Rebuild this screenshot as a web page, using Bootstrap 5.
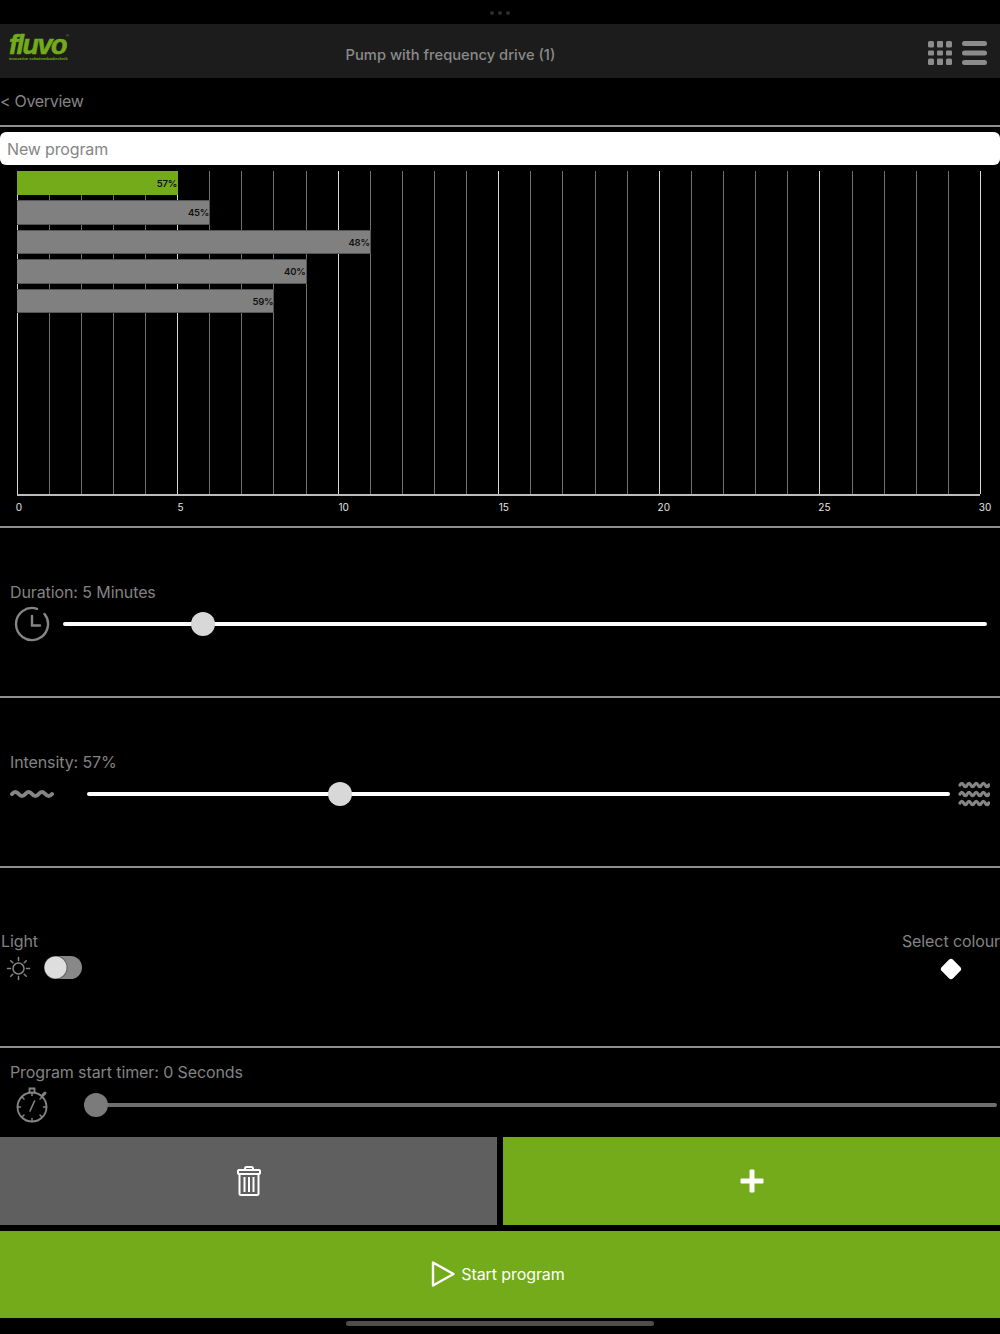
<!DOCTYPE html>
<html lang="en">
<head>
    <meta charset="UTF-8">
    <meta name="viewport" content="width=device-width, initial-scale=1.0">
    <title>Pump with frequency drive</title>
    <link href="https://cdn.jsdelivr.net/npm/bootstrap@5.3.0/dist/css/bootstrap.min.css" rel="stylesheet">
    <style>
        :root {
            --fluvo-green: #73ab1a;
            --soft-grey: #838383;
        }

        html, body {
            background: #000;
            height: 1334px;
            overflow: hidden;
        }

        body {
            font-family: "Inter", "Liberation Sans", sans-serif;
            font-size: 16px;
            color: var(--soft-grey);
        }

        .status-strip {
            height: 24px;
            padding-top: 11px;
        }

        .status-strip i {
            width: 4px;
            height: 4px;
            border-radius: 50%;
            background: #2c2c2c;
        }

        .app-header {
            height: 54px;
            background: #1c1c1c;
            padding: 0;
        }

        .brand-mark {
            margin: 0 0 0 9px;
            width: 60px;
            padding: 0;
            color: var(--fluvo-green);
            font-family: "Liberation Sans", sans-serif;
            line-height: 1;
            position: relative;
            top: -3px;
        }

        .brand-name {
            display: block;
            font-size: 27px;
            font-weight: 700;
            font-style: italic;
            letter-spacing: -1.5px;
            line-height: 21px;
            -webkit-text-stroke: .6px var(--fluvo-green);
        }

        .brand-name sup {
            font-size: 4px;
            font-style: normal;
            top: -17px;
            font-weight: 400;
            -webkit-text-stroke: 0;
        }

        .brand-tag {
            display: block;
            font-size: 3.9px;
            font-weight: 700;
            white-space: nowrap;
            line-height: 5px;
        }

        .page-title {
            width: 763px;
            padding-top: 8px;
            font-size: 14.7px;
            font-weight: 500;
            text-align: center;
            color: #8a8a8a;
        }

        .menu-icons {
            gap: 10px;
            padding: 3px 13px 0 0;
        }

        .back-row {
            height: 49px;
            padding: 11px 0 0;
            border-bottom: 2px solid #8f8f8f;
            font-size: 16px;
            line-height: 24px;
            letter-spacing: -.3px;
            color: #858585;
        }

        .program-name {
            margin-top: 5px;
            height: 33px;
            padding: 0 7px;
            border: 0;
            border-radius: 6px;
            font-size: 16px;
            letter-spacing: -.15px;
            color: #333;
        }

        .program-name::placeholder {
            color: #858585;
            opacity: 1;
        }

        .chart-box {
            height: 363px;
            position: relative;
            border-bottom: 2px solid #8f8f8f;
        }

        .chart-canvas {
            position: absolute;
            left: 16.5px;
            top: 6px;
            width: 963.5px;
            height: 325px;
            border-bottom: 2px solid #bdbdbd;
        }

        .grid-line {
            position: absolute;
            top: 0;
            bottom: 0;
            width: 1px;
            background: #707070;
        }

        .grid-line.major {
            background: #d8d8d8;
        }

        .bar-stack {
            position: relative;
            gap: 5px;
        }

        .time-bar {
            height: 24.4px;
            background: #808080;
            border: 1px solid #555;
            border-left: 0;
            font-size: 9.5px;
            font-weight: 600;
            letter-spacing: -.2px;
            line-height: 23px;
            text-align: right;
            color: #111;
        }

        .time-bar.active {
            background: var(--fluvo-green);
            border-color: var(--fluvo-green);
        }

        .axis-label {
            position: absolute;
            top: 330px;
            font-size: 10px;
            font-weight: 400;
            line-height: 12px;
            color: #e4e4e4;
            transform: translateX(-50%);
        }

        .control-block {
            height: 170px;
            padding-left: 10px;
            border-bottom: 2px solid #8f8f8f;
        }

        .control-label {
            font-size: 16px;
            line-height: 24px;
            letter-spacing: -.1px;
        }

        .control-row {
            height: 37px;
            margin: 1px 0 2px;
        }

        .slim-range {
            appearance: none;
            -webkit-appearance: none;
            background: transparent;
            height: 24px;
            display: block;
            margin: 0;
            padding: 0;
        }

        .slim-range::-webkit-slider-runnable-track {
            height: 4px;
            border-radius: 2px;
            background: #fff;
        }

        .slim-range::-webkit-slider-thumb {
            -webkit-appearance: none;
            width: 24px;
            height: 24px;
            margin-top: -10px;
            border-radius: 50%;
            background: #d8d8d8;
            border: 0;
        }

        .slim-range.muted::-webkit-slider-runnable-track {
            background: #6e6e6e;
        }

        .slim-range.muted::-webkit-slider-thumb {
            background: #7b7b7b;
        }

        .range-duration { width: 924px; margin-left: 10px; }
        .range-intensity { width: 863px; margin-left: 11px; }
        .range-timer { width: 913px; margin-left: 30px; }

        .light-block {
            height: 180px;
            padding-top: 61px;
            border-bottom: 2px solid #8f8f8f;
        }

        .light-side {
            padding-left: 1px;
        }

        .light-row {
            height: 30px;
            gap: 13px;
            padding-left: 5px;
        }

        .light-toggle.form-check-input {
            width: 38px;
            height: 23px;
            margin: 0;
            border: 0;
            float: none;
            background-color: #888;
            background-image: radial-gradient(circle at 11.5px 11.5px, #dedede 10.5px, #5f5f5f 11.5px, #888 12.5px);
            background-size: auto;
            border-radius: 12px;
        }

        .colour-pick {
            height: 30px;
        }

        .colour-dot {
            width: 16px;
            height: 16px;
            margin: 2px 41px 0 0;
            background: #fff;
            border-radius: 3px;
            transform: rotate(45deg);
        }

        .timer-block {
            height: 89px;
            padding: 12px 0 0 10px;
        }

        .timer-block .control-row {
            height: 42px;
            margin: 0;
        }

        .action-row {
            gap: 6px;
        }

        .square-btn {
            height: 88px;
            border: 0;
            border-radius: 0;
            color: #fff;
            font-size: 16px;
        }

        .btn-trash, .btn-trash:hover {
            background: #5f5f5f;
        }

        .btn-go, .btn-go:hover {
            background: var(--fluvo-green);
            color: #fff;
        }

        .start-btn {
            margin-top: 6px;
            height: 87px;
            padding: 0 4px 2px 0;
            gap: 6px;
            letter-spacing: -.1px;
        }

        .home-bar {
            width: 308px;
            height: 5px;
            margin: 3px auto 0;
            border-radius: 3px;
            background: #4e4e4e;
        }
    </style>
</head>
<body>
    <div class="status-strip d-flex justify-content-center gap-1">
        <i></i><i></i><i></i>
    </div>

    <nav class="navbar app-header flex-nowrap justify-content-start">
        <a class="navbar-brand brand-mark" href="#">
            <span class="brand-name">fluvo<sup>®</sup></span>
            <span class="brand-tag">innovative schwimmbadtechnik</span>
        </a>
        <div class="page-title">Pump with frequency drive (1)</div>
        <div class="menu-icons d-flex ms-auto">
            <svg width="24" height="24" viewBox="0 0 24 24" fill="#8c8c8c">
                <rect x="0" y="0" width="6" height="6.5" rx="1.5"/><rect x="9" y="0" width="6" height="6.5" rx="1"/><rect x="18" y="0" width="6" height="6.5" rx="1.5"/>
                <rect x="0" y="9.500" width="6" height="5" rx="1"/><rect x="9" y="9.500" width="6" height="5" rx="1"/><rect x="18" y="9.500" width="6" height="5" rx="1"/>
                <rect x="0" y="17.500" width="6" height="6.500" rx="1.500"/><rect x="9" y="17.500" width="6" height="6.500" rx="1"/><rect x="18" y="17.500" width="6" height="6.500" rx="1.500"/>
            </svg>
            <svg width="25" height="24" viewBox="0 0 25 24" fill="#8c8c8c">
                <rect x="0" y="0" width="25" height="5" rx="2.500"/><rect x="0" y="9.500" width="25" height="5" rx="2.500"/><rect x="0" y="19" width="25" height="5" rx="2.500"/>
            </svg>
        </div>
    </nav>

    <div class="back-row">&lt; Overview</div>

    <input type="text" class="form-control program-name" placeholder="New program">

    <div class="chart-box">
        <div class="chart-canvas" id="chartCanvas">
            <div class="bar-stack d-flex flex-column" id="barStack"></div>
        </div>
    </div>

    <div class="control-block d-flex flex-column justify-content-center">
        <div class="control-label">Duration: 5 Minutes</div>
        <div class="control-row d-flex align-items-center">
            <svg width="43" height="36" viewBox="0 0 43 36" fill="none" stroke="#858585" stroke-width="2.400" stroke-linecap="round">
                <path d="M27 2.800A16 16 0 1 0 34.500 8"/>
                <path d="M22 10v9.500h8"/>
            </svg>
            <input type="range" class="slim-range range-duration" min="0" max="1000" value="142">
        </div>
    </div>

    <div class="control-block d-flex flex-column justify-content-center">
        <div class="control-label">Intensity: 57%</div>
        <div class="control-row d-flex align-items-center">
            <svg width="66" height="12" viewBox="0 0 66 12" fill="none" stroke="#858585" stroke-width="4" stroke-linecap="round">
                <path d="M2 6q3.330-4 6.670 0t6.670 0t6.670 0t6.670 0t6.670 0t6.670 0"/>
            </svg>
            <input type="range" class="slim-range range-intensity" min="0" max="1000" value="287">
            <svg class="ms-2" width="32" height="26" viewBox="0 0 32 26" fill="none" stroke="#858585" stroke-width="3.200" stroke-linecap="round">
                <path d="M2 4q1.800-3.500 3.600 0t3.600 0t3.600 0t3.600 0t3.600 0t3.600 0t3.600 0t3.600 0"/>
                <path d="M2 13q1.800-3.500 3.600 0t3.600 0t3.600 0t3.600 0t3.600 0t3.600 0t3.600 0t3.600 0"/>
                <path d="M2 22q1.800-3.500 3.600 0t3.600 0t3.600 0t3.600 0t3.600 0t3.600 0t3.600 0t3.600 0"/>
            </svg>
        </div>
    </div>

    <div class="light-block d-flex justify-content-between">
        <div class="light-side">
            <div class="control-label">Light</div>
            <div class="light-row d-flex align-items-center">
                <svg width="25" height="25" viewBox="0 0 25 25" fill="none" stroke="#858585" stroke-width="1.500" stroke-linecap="round">
                    <circle cx="12.500" cy="12.500" r="5.500"/>
                    <path d="M12.500 1.500v3M12.500 20.500v3M1.500 12.500h3M20.500 12.500h3M4.700 4.700l2.100 2.100M18.200 18.200l2.100 2.100M4.700 20.300l2.100-2.100M18.200 6.800l2.100-2.100"/>
                </svg>
                <div class="form-check form-switch m-0 p-0 d-flex">
                    <input class="form-check-input light-toggle" type="checkbox" role="switch">
                </div>
            </div>
        </div>
        <div class="d-flex flex-column align-items-end">
            <div class="control-label">Select colour</div>
            <div class="colour-pick d-flex align-items-center"><div class="colour-dot"></div></div>
        </div>
    </div>

    <div class="timer-block">
        <div class="control-label">Program start timer: 0 Seconds</div>
        <div class="control-row d-flex align-items-center">
            <svg width="44" height="36" viewBox="0 0 44 36" fill="none" stroke="#858585" stroke-width="1.800" stroke-linecap="round">
                <circle cx="22" cy="20" r="14.500"/>
                <path d="M19.500 5.500V1.500h5v4"/>
                <path d="M33 8l2-2" stroke-width="3"/>
                <path d="M20 24l4.500-10" stroke-width="1.600"/>
                <path d="M22 5.500v3M22 31.500v3M7.500 20h3M33.500 20h3M12 10l2 2M30 28l2 2M12 30l2-2M30 12l2-2" stroke-width="1.500"/>
            </svg>
            <input type="range" class="slim-range muted range-timer" min="0" max="100" value="0">
        </div>
    </div>

    <div class="action-row d-flex">
        <button type="button" class="btn square-btn btn-trash flex-fill w-50 d-flex align-items-center justify-content-center">
            <svg width="24" height="30" viewBox="0 0 24 30" fill="none" stroke="#fff" stroke-width="2">
                <path d="M8 4V2.500Q8 1 9.500 1h5Q16 1 16 2.500V4"/>
                <rect x="1" y="4" width="22" height="4" rx="1"/>
                <path d="M2.500 8v19.500Q2.500 29 4 29h16q1.500 0 1.500-1.500V8"/>
                <path d="M7.500 11v15M12 11v15M16.500 11v15"/>
            </svg>
        </button>
        <button type="button" class="btn square-btn btn-go flex-fill w-50 d-flex align-items-center justify-content-center">
            <svg width="24" height="24" viewBox="0 0 24 24" fill="#fff">
                <rect x="9.500" y="0.500" width="5" height="23" rx="1"/><rect x="0.500" y="9.500" width="23" height="5" rx="1"/>
            </svg>
        </button>
    </div>

    <button type="button" class="btn square-btn btn-go start-btn w-100 d-flex align-items-center justify-content-center">
        <svg width="24" height="26" viewBox="0 0 24 26" fill="none" stroke="#fff" stroke-width="2.400" stroke-linejoin="round">
            <path d="M2 1.500v23L22.500 13z"/>
        </svg>
        <span>Start program</span>
    </button>

    <div class="home-bar"></div>

    <script src="https://cdn.jsdelivr.net/npm/bootstrap@5.3.0/dist/js/bootstrap.bundle.min.js"></script>
    <script>
        const unitWidth = 963.5 / 30;
        const steps = [
            { minutes: 5, percent: 57, active: true },
            { minutes: 6, percent: 45 },
            { minutes: 11, percent: 48 },
            { minutes: 9, percent: 40 },
            { minutes: 8, percent: 59 }
        ];

        const canvas = document.getElementById('chartCanvas');
        const barStack = document.getElementById('barStack');

        // grid first, then the bars on top of it
        for (let i = 0; i <= 30; i++) {
            const line = document.createElement('div');
            line.className = 'grid-line' + (i % 5 === 0 ? ' major' : '');
            line.style.left = (i * unitWidth) + 'px';
            canvas.insertBefore(line, barStack);
        }

        const labelOffsets = { 0: 2.500, 5: 3.500, 10: 6, 15: 5.500, 20: 5, 25: 5, 30: 5 };
        Object.keys(labelOffsets).forEach(tick => {
            const label = document.createElement('div');
            label.className = 'axis-label';
            label.textContent = tick;
            label.style.left = (tick * unitWidth + labelOffsets[tick]) + 'px';
            canvas.appendChild(label);
        });

        barStack.innerHTML = steps.map(step =>
            `<div class="time-bar${step.active ? ' active' : ''}" style="width:${step.minutes * unitWidth + 1}px">${step.percent}%</div>`
        ).join('');
    </script>
</body>
</html>
